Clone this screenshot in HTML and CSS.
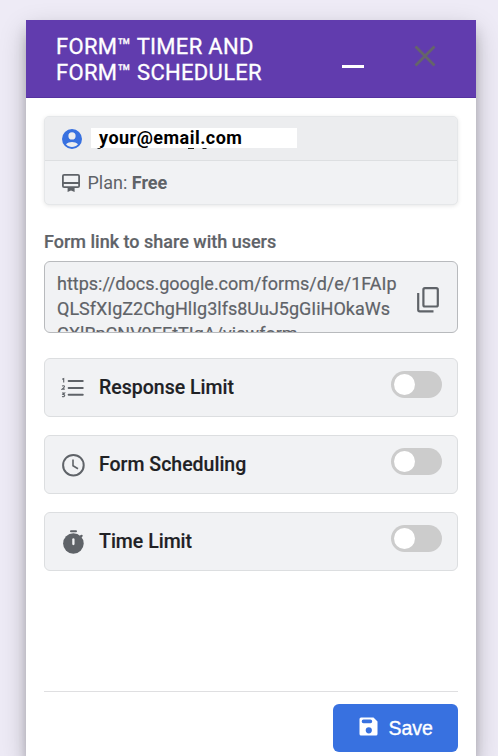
FILE: index.html
```html
<!DOCTYPE html>
<html lang="en">
<head>
<meta charset="utf-8">
<title>Form Timer and Form Scheduler</title>
<link rel="stylesheet" href="styles.css">
</head>
<body>
<main class="panel">
  <header class="header">
    <h1 class="title">FORM™ TIMER AND<br>FORM™ SCHEDULER</h1>
    <span class="minimize"></span>
    <svg class="close" width="22" height="22" viewBox="0 0 22 22"><path d="M1.5 1.5 20.5 20.5M20.5 1.5 1.5 20.5" stroke="#65646a" stroke-width="2.8" fill="none"/></svg>
  </header>
  <div class="content">
    <section class="account">
      <div class="account-row user">
        <svg width="20" height="20" viewBox="2 2 20 20"><path fill="#3871e0" d="M12 2a10 10 0 1 0 0 20 10 10 0 0 0 0-20zm0 3.3a3.6 3.6 0 1 1 0 7.2 3.6 3.6 0 0 1 0-7.2zm0 14.7c-2.4 0-4.5-1-6-2.7 1.500-1.400 3.700-2.200 6-2.200s4.500.8 6 2.200c-1.500 1.700-3.600 2.700-6 2.700z"/></svg>
        <span class="email">your@email.com
          <svg class="descenders" width="120" height="2" viewBox="0 0 120 2"><path d="M6.500 .4h3M97 .5h6M111.500 .5h4" stroke="#222" stroke-width="1"/></svg>
        </span>
      </div>
      <div class="account-row plan">
        <svg width="18" height="18" viewBox="0 0 18 18"><rect x=".9" y=".9" width="16.200" height="12.200" rx="1.200" fill="none" stroke="#5f6368" stroke-width="1.800"/><path d="M1 8.900h16" stroke="#5f6368" stroke-width="2"/><path d="M5.600 13h7v5L9 16.400 5.600 18z" fill="#5f6368"/></svg>
        <span>Plan: <b>Free</b></span>
      </div>
    </section>
    <h2 class="label">Form link to share with users</h2>
    <div class="link-box">
      <div class="link">https://docs.google.com/forms/d/e/1FAIpQLSfXIgZ2ChgHlIg3lfs8UuJ5gGIiHOkaWsCXlRpCNV0EEtTIgA/viewform</div>
      <svg class="copy" width="22" height="26" viewBox="0 0 22 26"><rect x="6.400" y="1.200" width="14.400" height="18.300" rx="1.500" fill="none" stroke="#5f6368" stroke-width="2.200"/><path d="M1.200 6v16.800q0 1.500 1.500 1.500H16.500" fill="none" stroke="#5f6368" stroke-width="2.200"/></svg>
    </div>
    <section class="option">
      <svg class="option-icon" width="24" height="24" viewBox="0 0 24 24"><path d="M7.700 5h14M7.700 12h14M7.700 18.800h14" stroke="#5f6368" stroke-width="2.100" stroke-linecap="round"/><path d="M1.200 3.300l1.500-.7v4M1 10q2.500-.8 2.500.5 0 .8-2.400 2.600h2.700M1 17h2.500l-1.500 1.500q1.800 0 1.700 1.200-.3 1.400-2.700.8" fill="none" stroke="#5f6368" stroke-width="1.100"/></svg>
      <span class="option-name">Response Limit</span>
      <span class="toggle"></span>
    </section>
    <section class="option">
      <svg class="option-icon" width="24" height="24" viewBox="0 0 24 24"><circle cx="12.400" cy="12.200" r="10.300" fill="none" stroke="#5f6368" stroke-width="2"/><path d="M12 6.500v6.200l5 3" fill="none" stroke="#5f6368" stroke-width="1.600"/></svg>
      <span class="option-name">Form Scheduling</span>
      <span class="toggle"></span>
    </section>
    <section class="option">
      <svg class="option-icon" width="24" height="24" viewBox="0 0 24 24"><path d="M10 1.300h5" stroke="#5f6368" stroke-width="2" stroke-linecap="round"/><path d="M19.500 6.800l1-.9" stroke="#5f6368" stroke-width="2.400" stroke-linecap="round"/><circle cx="12.400" cy="13.500" r="10.300" fill="#5f6368"/><path d="M12.400 9.500v4.600" stroke="#f1f2f4" stroke-width="2.300" stroke-linecap="round"/></svg>
      <span class="option-name">Time Limit</span>
      <span class="toggle"></span>
    </section>
    <footer class="footer">
      <button class="save" type="button">
        <svg width="19" height="19" viewBox="0 0 19 19"><path fill="#fff" fill-rule="evenodd" d="M2 .5h12.500l4 4V17q0 1.500-1.500 1.500H2Q.5 18.500.5 17V2Q.5.5 2 .5zM4.500 2.600a1.700 1.700 0 0 0 0 3.600h6.900a1.800 1.800 0 0 0 0-3.600zM9.800 10.200a3.100 3.100 0 1 0 0 6.200 3.100 3.100 0 0 0 0-6.200z"/></svg>
        <span>Save</span>
      </button>
    </footer>
  </div>
</main>
</body>
</html>
```
FILE: styles.css
```css
* { box-sizing: border-box; }
body {
  margin: 0;
  height: 756px;
  overflow: hidden;
  padding: 20px 22px 0 26px;
  background: #eeebf6;
  font-family: Roboto, "Liberation Sans", sans-serif;
  color: #5f6368;
}
svg { display: block; flex: none; }
.panel {
  height: 736px;
  background: #fff;
  box-shadow: 0 9px 12px rgba(0, 0, 0, .13), 0 10px 26px rgba(0, 0, 0, .2), 0 20px 8px rgba(0, 0, 0, .08);
}
.header {
  display: flex;
  height: 78px;
  padding: 14px 40px 0 30px;
  background: #613cae;
  border-bottom: 1px solid #5532a0;
}
.title {
  margin: 0;
  width: 286px;
  font-size: 22px;
  line-height: 26px;
  font-weight: 400;
  letter-spacing: .3px;
  color: #fff;
  -webkit-text-stroke: .3px #fff;
}
.minimize { width: 22px; height: 3px; margin-top: 31px; background: #fff; }
.close { margin: 11px 0 0 50px; }
.content { padding: 18px 18px 0; }
.account {
  height: 89px;
  overflow: hidden;
  border: 1px solid #e5e7e9;
  border-radius: 5px;
  background: #f1f2f4;
  box-shadow: 0 1px 4px rgba(0, 0, 0, .1);
}
.account-row { display: flex; align-items: center; height: 44px; padding-left: 17px; }
.user { background: #ecedef; border-bottom: 1px solid #dddfe1; }
.email {
  position: relative;
  width: 206px;
  height: 20px;
  margin: -1px 0 0 9px;
  padding-left: 8px;
  background: #fff;
  color: #000;
  font-size: 18px;
  line-height: 20px;
  font-weight: 700;
  letter-spacing: .48px;
}
.descenders { position: absolute; left: 0; top: 20px; }
.plan { height: 43px; gap: 8px; padding-left: 16.500px; font-size: 18px; }
.plan b { font-weight: 700; }
.label {
  margin: 26px 0 8px;
  font-size: 18px;
  line-height: 22px;
  font-weight: 500;
  -webkit-text-stroke: .2px #5f6368;
}
.link-box {
  display: flex;
  height: 72px;
  padding: 9px 18px 0 12px;
  border: 1px solid #b8babd;
  border-radius: 6px;
  background: #f1f2f4;
  overflow: hidden;
}
.link { width: 342px; font-size: 18px; line-height: 25px; word-break: break-all; -webkit-text-stroke: .2px #5f6368; }
.copy { margin: 16px 0 0 17.500px; }
.option {
  display: flex;
  height: 59px;
  margin-top: 18px;
  padding: 0 15px 0 17px;
  border: 1px solid #dcdee0;
  border-radius: 6px;
  background: #f1f2f4;
}
.link-box + .option { margin-top: 25px; }
.option-icon { margin: 17px 0 0 -1px; }
.option-name {
  flex: 1;
  margin-left: 14px;
  font-size: 19.500px;
  line-height: 57px;
  font-weight: 500;
  color: #202124;
  -webkit-text-stroke: .15px #202124;
}
.toggle {
  width: 51px;
  height: 27px;
  margin-top: 12px;
  padding: 3px;
  border-radius: 14px;
  background: #ccc;
}
.toggle::before { content: ""; display: block; width: 21px; height: 21px; border-radius: 50%; background: #fff; }
.footer { margin-top: 120px; padding-top: 12px; border-top: 1px solid #dfdfe1; }
.save {
  display: flex;
  width: 125px;
  height: 48px;
  margin-left: auto;
  padding: 0 0 0 26px;
  align-items: center;
  gap: 11px;
  border: 0;
  border-radius: 6px;
  background: #3871e0;
  color: #fff;
  font: 19.500px "Liberation Sans", Arial, sans-serif;
  -webkit-text-stroke: .35px #fff;
}
.save svg { margin: 0 0 4px -.5px; }
```
